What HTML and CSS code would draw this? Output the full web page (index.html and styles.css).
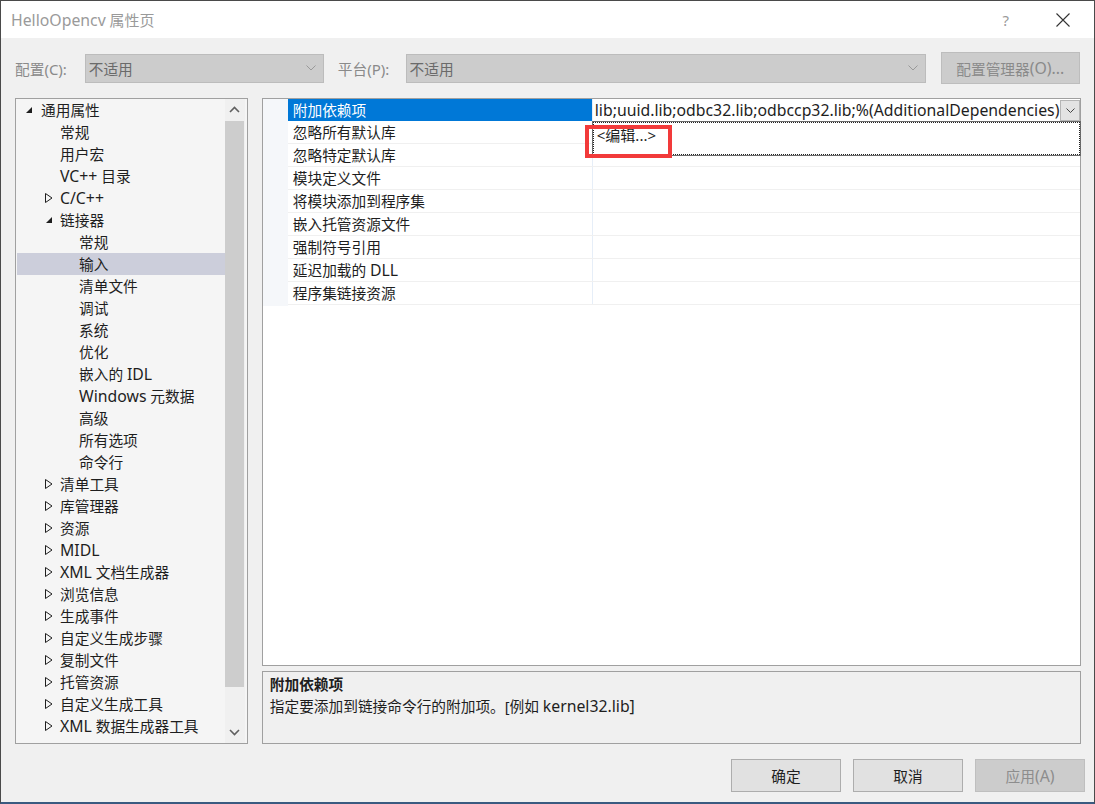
FILE: index.html
```html
<!DOCTYPE html>
<html lang="zh-CN">
<head>
<meta charset="utf-8">
<title>HelloOpencv 属性页</title>
<link rel="stylesheet" href="styles.css">
</head>
<body>
<div class="window">
  <div class="titlebar">
    <span class="title"><span class="la">HelloOpencv</span> 属性页</span>
    <span class="help">?</span>
    <svg class="close" width="14" height="14" viewBox="0 0 14 14"><path d="M0.5 0.5 L13.5 13.5 M13.5 0.5 L0.5 13.5" stroke="#333" stroke-width="1.1" fill="none"/></svg>
  </div>

  <div class="toolbar">
    <span class="lbl">配置<span class="la">(C):</span></span>
    <div class="select sel1"><span>不适用</span><svg width="10" height="6" viewBox="0 0 10 6"><path d="M0.5 0.5 L5 5 L9.5 0.5" stroke="#999" fill="none"/></svg></div>
    <span class="lbl lbl2">平台<span class="la">(P):</span></span>
    <div class="select sel2"><span>不适用</span><svg width="10" height="6" viewBox="0 0 10 6"><path d="M0.5 0.5 L5 5 L9.5 0.5" stroke="#999" fill="none"/></svg></div>
    <div class="mgr">配置管理器<span class="la">(O)...</span></div>
  </div>

  <div class="main">
    <div class="tree">
      <div class="tree-list">
        <div class="node l0"><span class="tw"><svg width="8" height="8" viewBox="0 0 8 8"><path d="M7 1 L7 7 L1 7 Z" fill="#1e1e1e"/></svg></span>通用属性</div>
        <div class="node l1"><span class="tw"></span>常规</div>
        <div class="node l1"><span class="tw"></span>用户宏</div>
        <div class="node l1"><span class="tw"></span><span class="la">VC++</span>&nbsp;目录</div>
        <div class="node l1"><span class="tw"><svg class="col" width="8" height="10" viewBox="0 0 8 10"><path d="M0.5 0.5 L7 5 L0.5 9.5 Z" fill="none" stroke="#1e1e1e"/></svg></span><span class="la">C/C++</span></div>
        <div class="node l1"><span class="tw"><svg width="8" height="8" viewBox="0 0 8 8"><path d="M7 1 L7 7 L1 7 Z" fill="#1e1e1e"/></svg></span>链接器</div>
        <div class="node l2"><span class="tw"></span>常规</div>
        <div class="node l2 selected"><span class="tw"></span>输入</div>
        <div class="node l2"><span class="tw"></span>清单文件</div>
        <div class="node l2"><span class="tw"></span>调试</div>
        <div class="node l2"><span class="tw"></span>系统</div>
        <div class="node l2"><span class="tw"></span>优化</div>
        <div class="node l2"><span class="tw"></span>嵌入的&nbsp;<span class="la">IDL</span></div>
        <div class="node l2"><span class="tw"></span><span class="la">Windows</span>&nbsp;元数据</div>
        <div class="node l2"><span class="tw"></span>高级</div>
        <div class="node l2"><span class="tw"></span>所有选项</div>
        <div class="node l2"><span class="tw"></span>命令行</div>
        <div class="node l1"><span class="tw"><svg class="col" width="8" height="10" viewBox="0 0 8 10"><path d="M0.5 0.5 L7 5 L0.5 9.5 Z" fill="none" stroke="#1e1e1e"/></svg></span>清单工具</div>
        <div class="node l1"><span class="tw"><svg class="col" width="8" height="10" viewBox="0 0 8 10"><path d="M0.5 0.5 L7 5 L0.5 9.5 Z" fill="none" stroke="#1e1e1e"/></svg></span>库管理器</div>
        <div class="node l1"><span class="tw"><svg class="col" width="8" height="10" viewBox="0 0 8 10"><path d="M0.5 0.5 L7 5 L0.5 9.5 Z" fill="none" stroke="#1e1e1e"/></svg></span>资源</div>
        <div class="node l1"><span class="tw"><svg class="col" width="8" height="10" viewBox="0 0 8 10"><path d="M0.5 0.5 L7 5 L0.5 9.5 Z" fill="none" stroke="#1e1e1e"/></svg></span><span class="la">MIDL</span></div>
        <div class="node l1"><span class="tw"><svg class="col" width="8" height="10" viewBox="0 0 8 10"><path d="M0.5 0.5 L7 5 L0.5 9.5 Z" fill="none" stroke="#1e1e1e"/></svg></span><span class="la">XML</span>&nbsp;文档生成器</div>
        <div class="node l1"><span class="tw"><svg class="col" width="8" height="10" viewBox="0 0 8 10"><path d="M0.5 0.5 L7 5 L0.5 9.5 Z" fill="none" stroke="#1e1e1e"/></svg></span>浏览信息</div>
        <div class="node l1"><span class="tw"><svg class="col" width="8" height="10" viewBox="0 0 8 10"><path d="M0.5 0.5 L7 5 L0.5 9.5 Z" fill="none" stroke="#1e1e1e"/></svg></span>生成事件</div>
        <div class="node l1"><span class="tw"><svg class="col" width="8" height="10" viewBox="0 0 8 10"><path d="M0.5 0.5 L7 5 L0.5 9.5 Z" fill="none" stroke="#1e1e1e"/></svg></span>自定义生成步骤</div>
        <div class="node l1"><span class="tw"><svg class="col" width="8" height="10" viewBox="0 0 8 10"><path d="M0.5 0.5 L7 5 L0.5 9.5 Z" fill="none" stroke="#1e1e1e"/></svg></span>复制文件</div>
        <div class="node l1"><span class="tw"><svg class="col" width="8" height="10" viewBox="0 0 8 10"><path d="M0.5 0.5 L7 5 L0.5 9.5 Z" fill="none" stroke="#1e1e1e"/></svg></span>托管资源</div>
        <div class="node l1"><span class="tw"><svg class="col" width="8" height="10" viewBox="0 0 8 10"><path d="M0.5 0.5 L7 5 L0.5 9.5 Z" fill="none" stroke="#1e1e1e"/></svg></span>自定义生成工具</div>
        <div class="node l1"><span class="tw"><svg class="col" width="8" height="10" viewBox="0 0 8 10"><path d="M0.5 0.5 L7 5 L0.5 9.5 Z" fill="none" stroke="#1e1e1e"/></svg></span><span class="la">XML</span>&nbsp;数据生成器工具</div>
      </div>
      <div class="scrollbar">
        <svg class="arrow" width="11" height="7" viewBox="0 0 11 7"><path d="M1 6 L5.5 1.5 L10 6" stroke="#606060" stroke-width="1.6" fill="none"/></svg>
        <div class="thumb"></div>
        <svg class="arrow" width="11" height="7" viewBox="0 0 11 7"><path d="M1 1 L5.5 5.5 L10 1" stroke="#606060" stroke-width="1.6" fill="none"/></svg>
      </div>
    </div>

    <div class="right">
      <div class="grid">
        <div class="gutter"></div>
        <div class="rows">
          <div class="row">
            <div class="name sel">附加依赖项</div>
            <div class="value first"><span class="vtext la">lib;uuid.lib;odbc32.lib;odbccp32.lib;%(AdditionalDependencies)</span><span class="dd"><svg width="9" height="5" viewBox="0 0 9 5"><path d="M0.5 0.5 L4.5 4.5 L8.5 0.5" stroke="#444" fill="none"/></svg></span></div>
          </div>
          <div class="row"><div class="name">忽略所有默认库</div><div class="value"></div></div>
          <div class="row"><div class="name">忽略特定默认库</div><div class="value"></div></div>
          <div class="row"><div class="name">模块定义文件</div><div class="value"></div></div>
          <div class="row"><div class="name">将模块添加到程序集</div><div class="value"></div></div>
          <div class="row"><div class="name">嵌入托管资源文件</div><div class="value"></div></div>
          <div class="row"><div class="name">强制符号引用</div><div class="value"></div></div>
          <div class="row"><div class="name">延迟加载的&nbsp;<span class="la">DLL</span></div><div class="value"></div></div>
          <div class="row"><div class="name">程序集链接资源</div><div class="value"></div></div>
        </div>
        <div class="popup"><span>&lt;编辑...&gt;</span></div>
        <div class="redbox"></div>
      </div>
      <div class="desc">
        <div class="desc-title">附加依赖项</div>
        <div class="desc-text">指定要添加到链接命令行的附加项。[例如&nbsp;<span class="la">kernel32.lib]</span></div>
      </div>
    </div>
  </div>

  <div class="footer">
    <div class="btn">确定</div>
    <div class="btn">取消</div>
    <div class="btn disabled">应用<span class="la">(A)</span></div>
  </div>
</div>
</body>
</html>
```

FILE: styles.css
```css
* { box-sizing: border-box; }
html, body { margin: 0; padding: 0; }
body {
  width: 1095px;
  height: 804px;
  overflow: hidden;
  font-family: "Noto Sans", "Noto Sans CJK SC", sans-serif;
  font-size: 14.7px;
  color: #1e1e1e;
  background: #2b2b2b;
}
.la { font-size: 15.8px; }
.window {
  width: 1095px;
  height: 804px;
  border: 1px solid #4a4a4a;
  border-bottom: 2px solid #3a5a80;
  background: #f0f0f0;
  display: flex;
  flex-direction: column;
}
.titlebar {
  height: 37px;
  background: #ffffff;
  display: flex;
  align-items: center;
  padding-left: 10px;
  flex-shrink: 0;
}
.title {
  color: #9a9a9a;
  font-size: 15px;
  flex: 1;
}
.help {
  color: #9a9a9a;
  font-size: 15px;
  margin-right: 47px;
}
.close { margin-right: 24px; }

.toolbar {
  height: 60px;
  display: flex;
  align-items: center;
  padding: 0 14px 0 14px;
  flex-shrink: 0;
}
.lbl {
  color: #8a8a8a;
  width: 70px;
}
.lbl .la { font-size: 15px; }
.lbl2 { width: 68px; margin-left: 14px; }
.select {
  height: 29px;
  background: #cccccc;
  border: 1px solid #bcbcbc;
  display: flex;
  align-items: center;
  justify-content: space-between;
  padding: 0 7px 0 3px;
  color: #6a6a6a;
}
.sel1 { width: 240px; }
.sel2 { width: 522px; }
.mgr {
  margin-left: 15px;
  width: 140px;
  height: 32px;
  background: #cccccc;
  border: 1px solid #bdbdbd;
  color: #8a8a8a;
  display: flex;
  align-items: center;
  justify-content: center;
}

.main {
  display: flex;
  gap: 14px;
  padding: 0 13px 0 14px;
  height: 646px;
  flex-shrink: 0;
}
.tree {
  width: 233px;
  height: 646px;
  border: 1px solid #a0a0a0;
  background: #f5f5f5;
  display: flex;
  padding: 0 1px 0 1px;
}
.tree-list {
  flex: 1;
  overflow: hidden;
}
.node {
  height: 22px;
  line-height: 22px;
  white-space: nowrap;
  display: flex;
  align-items: center;
}
.node .tw {
  width: 18px;
  display: inline-flex;
  align-items: center;
  justify-content: flex-start;
  height: 22px;
  flex-shrink: 0;
}
.l0 { padding-left: 8px; }
.l0 .tw { width: 16px; }
.l1 { padding-left: 28px; }
.l1 .tw { width: 15px; }
.l2 { padding-left: 62px; }
.l2 .tw { width: 0; }
.node.selected { background: #cccedb; }
.scrollbar {
  width: 20px;
  display: flex;
  flex-direction: column;
  align-items: center;
  background: #f0f0f0;
  margin-right: 1px;
}
.scrollbar .arrow { margin: 7px 0 8px; flex-shrink: 0; }
.scrollbar .arrow:last-child { margin: 8px 0 7px; }
.thumb {
  width: 19px;
  flex: 1;
  background: #cdcdcd;
  margin-bottom: 34px;
}

.right {
  width: 820px;
  display: flex;
  flex-direction: column;
  gap: 5px;
}
.grid {
  position: relative;
  height: 568px;
  border: 1px solid #a0a0a0;
  background: #ffffff;
  display: flex;
}
.gutter {
  width: 25px;
  height: 207px;
  background: #f5f7fa;
}
.rows { flex: 1; }
.row {
  height: 23px;
  display: flex;
  border-bottom: 1px solid #f0f0f0;
}
.row:first-child { height: 22px; border-bottom: none; }
.name {
  width: 305px;
  padding-left: 5px;
  line-height: 22px;
  border-right: 1px solid #e6eef8;
  white-space: nowrap;
}
.name.sel {
  background: #0078d7;
  color: #ffffff;
}
.value {
  flex: 1;
  display: flex;
  align-items: center;
  padding-left: 2px;
  white-space: nowrap;
  overflow: hidden;
}
.vtext { flex: 1; overflow: hidden; }
.dd {
  width: 20px;
  height: 21px;
  flex-shrink: 0;
  background: #e3e3e3;
  border: 1px solid #b5b5b5;
  display: flex;
  align-items: center;
  justify-content: center;
}
.popup {
  position: absolute;
  left: 329px;
  top: 22px;
  width: 489px;
  height: 35px;
  background: #ffffff;
  border: 1px solid #6a6a6a;
  outline: 1px dotted #222;
  outline-offset: -2px;
  padding: 3px 0 0 4px;
  font-size: 15px;
  line-height: 20px;
}
.redbox {
  position: absolute;
  left: 322px;
  top: 26px;
  width: 87px;
  height: 33px;
  border: 4px solid #f23a3a;
}
.desc {
  height: 73px;
  border: 1px solid #a0a0a0;
  background: #f0f0f0;
  padding: 1px 0 0 7px;
}
.desc-title { font-weight: bold; line-height: 22px; }
.desc-text { line-height: 22px; }

.footer {
  display: flex;
  justify-content: flex-end;
  gap: 12px;
  padding: 15px 9px 0 0;
}
.btn {
  width: 110px;
  height: 33px;
  background: #e1e1e1;
  border: 1px solid #adadad;
  display: flex;
  align-items: center;
  justify-content: center;
}
.btn.disabled {
  background: #cccccc;
  border-color: #bfbfbf;
  color: #8d8d8d;
}
```
